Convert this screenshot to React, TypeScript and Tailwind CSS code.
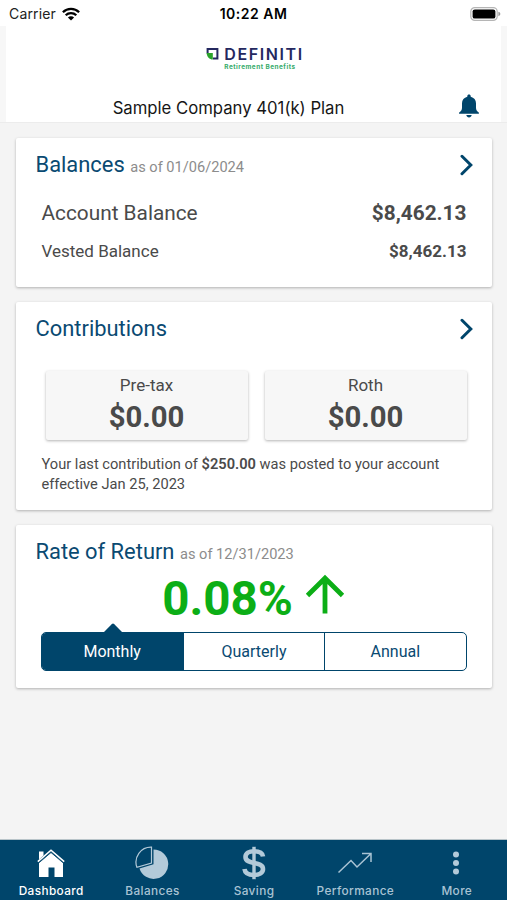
import type { ReactNode } from "react";

const TABS = ["Monthly", "Quarterly", "Annual"];

const StatusBar = () => (
  <div className="flex h-[26px] items-center justify-between bg-white pt-px font-['Inter'] text-black">
    <div className="flex w-[200px] items-center gap-[6px] pl-[9px]">
      <span className="text-[14px] tracking-[0.15px] text-[#222]">Carrier</span>
      <svg width="18" height="14" viewBox="0 0 18 14" fill="none" stroke="#000" strokeWidth="2.3">
        <path d="M0.9 5.2a11.6 11.6 0 0 1 16.2 0" />
        <path d="M3.7 8.2a7.6 7.6 0 0 1 10.6 0" />
        <path d="M9 13.6 5.9 10.5a4.4 4.4 0 0 1 6.2 0Z" fill="#000" stroke="none" />
      </svg>
    </div>
    <span className="text-[14px] font-semibold tracking-[0.5px]">10:22 AM</span>
    <div className="flex w-[200px] justify-end pr-[6px]">
      <svg width="31" height="14" viewBox="0 0 31 14">
        <rect x="0.8" y="0.6" width="26.4" height="12.8" rx="4" fill="#fff" stroke="#b5b5b5" strokeWidth="1.2" />
        <rect x="2.6" y="2.4" width="22.8" height="9.2" rx="2.2" fill="#000" />
        <path d="M28.4 4.8q2 .6 2 2.2t-2 2.2Z" fill="#999" />
      </svg>
    </div>
  </div>
);

const Header = () => (
  <div className="flex h-[97px] border-b border-[#ececec] bg-[#f7f7f7] px-[6px]">
    <div className="flex flex-1 flex-col bg-white">
      <div className="flex justify-center gap-[5px] pt-[19px] pl-[3px]">
        <svg className="mt-[2px]" width="13" height="14" viewBox="0 0 13 14">
          <path d="M1.6 6.4V1.900h9.800v9.600H7" fill="none" stroke="#24285f" strokeWidth="2" />
          <path d="M0.600 6h6.200v6.600C3.400 12.400 0.800 9.800 0.600 6Z" fill="#2ba42b" />
        </svg>
        <div className="flex flex-col">
          <span className="font-['Inter'] text-[16px] leading-[18px] font-semibold tracking-[1.6px] text-[#24285f]">
            DEFINITI
          </span>
          <span className="font-['Inter'] text-[6.4px] leading-[8px] font-bold tracking-[0.5px] text-[#35ab6a]">
            Retirement Benefits
          </span>
        </div>
      </div>
      <div className="mt-auto flex h-[30px] items-center">
        <h1 className="flex-1 pt-[3px] pr-[7px] text-center font-['Inter'] text-[16.7px] text-[#161616]">
          Sample Company 401(k) Plan
        </h1>
        <svg className="mr-[21px] mb-[2px]" width="22" height="24" viewBox="0 0 22 24" fill="#00456b">
          <path d="M11 .6c-1 0-1.7.7-1.7 1.6v.5C6 3.5 4 6 4 9.300v4.500c0 2.300-1 3.700-2.700 4.700-.6.400-.3 1.300.4 1.300h18.600c.7 0 1-.9.4-1.300-1.700-1-2.700-2.400-2.700-4.700V9.300c0-3.300-2-5.800-5.300-6.600v-.5C12.700 1.300 12 .6 11 .6Z" />
          <path d="M8.300 21h5.400c-.3 1.600-1.300 2.500-2.700 2.500S8.600 22.600 8.300 21Z" />
        </svg>
      </div>
    </div>
  </div>
);

const Card = ({ title, date, link, children }: { title: string; date?: string; link?: boolean; children: ReactNode }) => (
  <section className="rounded-[2px] bg-white px-[20px] shadow-[0_1px_3px_rgba(0,0,0,0.28)]">
    <div className="flex h-[54px] items-center justify-between">
      <h2 className="text-[21.900px] text-[#0a4a72]">
        {title}
        {date && <span className="ml-[5.500px] text-[14.600px] text-[#8c8c8c]">as of {date}</span>}
      </h2>
      {link && (
        <svg className="-mr-[2px]" width="14" height="22" viewBox="0 0 14 22" fill="none" stroke="#00456b" strokeWidth="3" strokeLinecap="round">
          <path d="M2 2.300 10.800 11 2 19.700" />
        </svg>
      )}
    </div>
    {children}
  </section>
);

const Source = ({ name, amount }: { name: string; amount: string }) => (
  <div className="flex h-[69px] flex-1 flex-col items-center rounded-[2px] bg-[#f7f7f7] pt-[3px] shadow-[0_1px_3px_rgba(0,0,0,0.3)]">
    <span className="text-[17px] leading-[23px]">{name}</span>
    <span className="text-[29.300px] leading-[40px] font-bold">{amount}</span>
  </div>
);

const NavItem = ({ label, active, children }: { label: string; active?: boolean; children: ReactNode }) => (
  <div className={active ? "flex flex-1 flex-col items-center text-white" : "flex flex-1 flex-col items-center text-[#a9c3d4]"}>
    <div className="flex h-[43px] items-center pt-[3px]">{children}</div>
    <span className="pl-px font-['Inter'] text-[11.800px] leading-[16px] font-medium tracking-[0.4px]">{label}</span>
  </div>
);

const App = () => {
  return (
    <div className="flex h-[900px] w-[507px] flex-col overflow-hidden bg-[#f4f4f4] font-['Roboto',sans-serif] text-[#4a4a4a]">
      <StatusBar />
      <Header />

      <main className="flex flex-1 flex-col gap-[15px] px-[15.500px] pt-[15px]">
        <Card title="Balances" date="01/06/2024" link>
          <div className="flex h-[40px] items-center justify-between pt-[3px] pr-[5px] pl-[6px] text-[20.800px]">
            <span>Account Balance</span>
            <span className="font-bold">$8,462.13</span>
          </div>
          <div className="flex h-[39px] items-center justify-between pt-px pr-[5px] pl-[6px] text-[17px]">
            <span>Vested Balance</span>
            <span className="font-bold">$8,462.13</span>
          </div>
          <div className="h-[16px]" />
        </Card>

        <Card title="Contributions" link>
          <div className="mt-[15px] flex gap-[17px] pr-[5px] pl-[10px]">
            <Source name="Pre-tax" amount="$0.00" />
            <Source name="Roth" amount="$0.00" />
          </div>
          <p className="pt-[15px] pb-[16px] pl-[6px] text-[14.650px] leading-[19.500px]">
            Your last contribution of <b className="font-semibold">$250.00</b> was posted to your account
            <br />
            effective Jan 25, 2023
          </p>
        </Card>

        <Card title="Rate of Return" date="12/31/2023">
          <div className="flex h-[44px] items-center justify-center gap-[12px] text-[#0cae16]">
            <span className="mb-[4px] text-[47.500px] leading-[42px] font-bold">0.08%</span>
            <svg className="mb-[14px]" width="40" height="40" viewBox="0 0 40 40" fill="none" stroke="currentColor" strokeWidth="4.800">
              <path d="M20 39.500V4M2.500 21.500 20 4.200l17.500 17.300" />
            </svg>
          </div>
          <svg className="ml-[67px]" width="20" height="9" viewBox="0 0 20 9" fill="#00456b">
            <path d="M1 9 8.900.9q1.100-1 2.200 0L19 9Z" />
          </svg>
          <div className="mx-[5px] grid h-[39px] grid-cols-3 overflow-hidden rounded-[5px] border border-[#00456b]">
            {TABS.map((tab, i) => (
              <button
                key={tab}
                className={
                  i === 0
                    ? "bg-[#00456b] text-[16px] text-white"
                    : "border-l border-[#00456b] text-[16px] text-[#0a4a72]"
                }
              >
                {tab}
              </button>
            ))}
          </div>
          <div className="h-[17px]" />
        </Card>
      </main>

      <nav className="flex h-[61px] border-t border-[#b9c4c9] bg-[#00456b]">
        <NavItem label="Dashboard" active>
          <svg width="28" height="29" viewBox="0 0 28 29" fill="currentColor">
            <path d="M2 2.500h4.500v4L2 10.500Z" />
            <path d="M.8 12.600 14 1.200l13.200 11.400" fill="none" stroke="currentColor" strokeWidth="1.600" />
            <path d="M2 13.600 14 3.600l12 10v14.300h-8.500v-9.500h-6v9.500H2Z" />
            <path d="M1.800 13.900 14 3.500l12.200 10.400" fill="none" stroke="#00456b" strokeWidth="0.900" />
          </svg>
        </NavItem>
        <NavItem label="Balances">
          <svg width="34" height="34" viewBox="0 0 34 34">
            <path d="M18.500 3.500A14.700 14.700 0 1 1 4.500 22.500L18.500 18.300Z" fill="#b3cad9" />
            <path d="M16.500 1.200V17L1.900 21.300A15 15 0 0 1 16.500 1.200Z" fill="none" stroke="#b3cad9" strokeWidth="1.200" />
          </svg>
        </NavItem>
        <NavItem label="Saving">
          <svg width="26" height="34" viewBox="0 0 26 34" fill="none" stroke="#b3cad9">
            <path d="M22 10.500C21.500 7 18 5.300 13 5.300S4.500 7.300 4.500 11c0 8.500 17.500 3.500 17.500 12 0 3.800-3.500 6-9 6s-9-2-9.500-6" strokeWidth="4.600" />
            <path d="M13 .8v32.400" strokeWidth="3.400" />
          </svg>
        </NavItem>
        <NavItem label="Performance">
          <svg width="36" height="24" viewBox="0 0 36 24" fill="none" stroke="#a9c3d4" strokeWidth="1.500">
            <path d="M1.500 21.500 14 9.500l6 6.500L33.500 3M25 2.500h9v8.500" />
          </svg>
        </NavItem>
        <NavItem label="More">
          <svg width="8" height="26" viewBox="0 0 8 26" fill="#b3cad9">
            <circle cx="4" cy="4.500" r="3" />
            <circle cx="4" cy="13" r="3" />
            <circle cx="4" cy="21.500" r="3" />
          </svg>
        </NavItem>
      </nav>
    </div>
  );
};

export default App;
